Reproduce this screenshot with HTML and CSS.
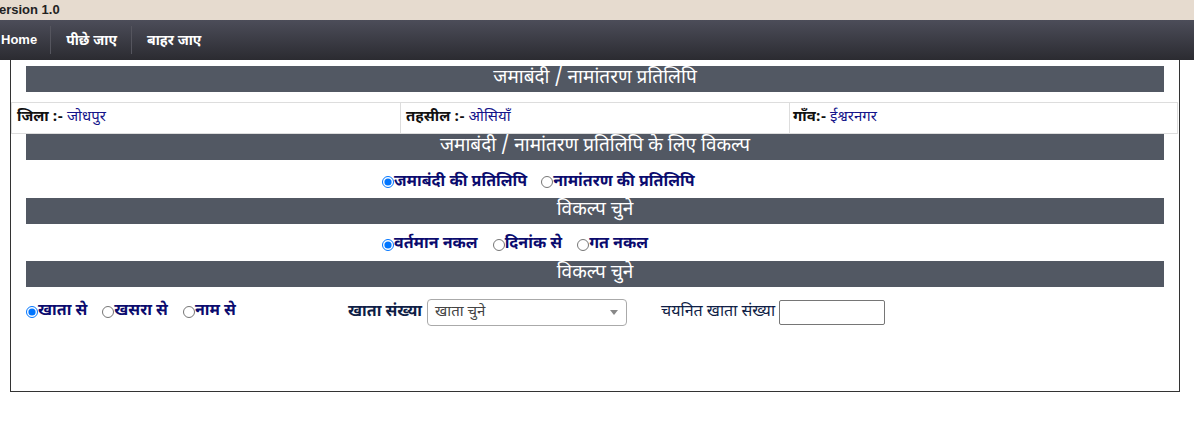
FILE: index.html
```html
<!DOCTYPE html>
<html lang="hi">
<head>
<meta charset="utf-8">
<title>जमाबंदी / नामांतरण प्रतिलिपि</title>
<link rel="stylesheet" href="styles.css">
</head>
<body>
<div class="topbar"><span class="ver">Version 1.0</span></div>
<nav class="nav">
  <a class="nav-item first" href="#">Home</a>
  <a class="nav-item hi" href="#">पीछे जाए</a>
  <a class="nav-item hi" href="#">बाहर जाए</a>
</nav>
<div class="panel">
  <div class="bar bar-first">जमाबंदी / नामांतरण प्रतिलिपि</div>
  <div class="info">
    <div class="cell"><b>जिला :-</b> <span class="val">जोधपुर</span></div>
    <div class="cell"><b>तहसील :-</b> <span class="val">ओसियाँ</span></div>
    <div class="cell"><b>गाँव:-</b> <span class="val">ईश्वरनगर</span></div>
  </div>
  <div class="bar">जमाबंदी / नामांतरण प्रतिलिपि के लिए विकल्प</div>
  <div class="opts opts-1">
    <label class="opt"><input type="radio" name="t" checked>जमाबंदी की प्रतिलिपि</label>
    <label class="opt"><input type="radio" name="t">नामांतरण की प्रतिलिपि</label>
  </div>
  <div class="bar">विकल्प चुने</div>
  <div class="opts opts-2">
    <label class="opt"><input type="radio" name="n" checked>वर्तमान नकल</label>
    <label class="opt"><input type="radio" name="n">दिनांक से</label>
    <label class="opt"><input type="radio" name="n">गत नकल</label>
  </div>
  <div class="bar">विकल्प चुने</div>
  <div class="search">
    <div class="search-radios">
      <label class="opt"><input type="radio" name="s" checked>खाता से</label>
      <label class="opt"><input type="radio" name="s">खसरा से</label>
      <label class="opt"><input type="radio" name="s">नाम से</label>
    </div>
    <div class="field">
      <span class="field-label bold">खाता संख्या</span>
      <div class="select"><span>खाता चुने</span><span class="caret"></span></div>
    </div>
    <div class="field field-2">
      <span class="field-label">चयनित खाता संख्या</span>
      <input class="textbox" type="text">
    </div>
  </div>
</div>
</body>
</html>
```

FILE: styles.css
```css
* { box-sizing: border-box; }
html, body { margin: 0; padding: 0; background: #fff; }
body {
  font-family: "Noto Sans Devanagari", "Noto Sans", "Liberation Sans", sans-serif;
  color: #000;
  overflow: hidden;
}
.topbar {
  height: 20px;
  background: #e6dbcf;
  font-family: "Liberation Sans", Arial, sans-serif;
  font-weight: bold;
  font-size: 13px;
  line-height: 20px;
  color: #222;
  overflow: hidden;
  white-space: nowrap;
}
.ver { margin-left: -9px; }
.nav {
  height: 40px;
  background: linear-gradient(#4c4d59, #2b2b31);
  display: flex;
  align-items: center;
}
.nav-item {
  color: #fff;
  text-decoration: none;
  font-weight: bold;
  font-size: 13px;
  line-height: 28px;
  height: 28px;
  padding: 0 14px 0 15px;
  border-right: 1px solid #55555e;
  font-family: "Liberation Sans", "Noto Sans Devanagari", sans-serif;
}
.nav-item.hi { font-size: 14px; padding: 0 14px 0 15px; }
.nav-item.first { padding-left: 1px; padding-right: 13px; }
.nav-item:last-child { border-right: none; }
.panel {
  width: 1170px;
  height: 332px;
  margin-left: 10px;
  border: 1px solid #333;
  border-top: none;
  padding-top: 6px;
}
.bar {
  margin: 0 15px;
  height: 26px;
  line-height: 26px;
  background: #525863;
  color: #fff;
  text-align: center;
  font-size: 19px;
  white-space: nowrap;
  overflow: hidden;
}
.info {
  margin-top: 10px;
  margin-right: 1px;
  display: grid;
  grid-template-columns: 389px 389px 1fr;
  border: 1px solid #ddd;
  height: 32px;
}
.cell {
  padding: 0 5px;
  font-size: 15px;
  line-height: 30px;
  border-right: 1px solid #ddd;
  white-space: nowrap;
}
.cell:last-child { border-right: none; padding-left: 3px; }
.cell b { color: #111; }
.val { color: #14148a; }
.opts {
  display: flex;
  align-items: center;
  padding-left: 371px;
  gap: 15px;
}
.opts-1 { height: 38px; padding-top: 6px; gap: 14px; }
.opts-2 { height: 37px; padding-top: 4px; }
.opt {
  display: inline-flex;
  align-items: center;
  font-weight: bold;
  font-size: 16px;
  color: #0b0b6e;
  white-space: nowrap;
}
.opt input {
  margin: 0;
  width: 12px;
  height: 12px;
}
.search {
  display: flex;
  align-items: center;
  padding: 12px 0 0 15px;
}
.search-radios {
  display: flex;
  gap: 15px;
  width: 322px;
  align-self: flex-start;
  padding-top: 2px;
}
.field {
  display: flex;
  align-items: center;
  gap: 5px;
}
.field-2 { margin-left: 34px; gap: 4px; }
.field-label {
  font-size: 16px;
  color: #0f1e46;
  white-space: nowrap;
}
.field-label.bold { font-weight: bold; }
.select {
  width: 200px;
  height: 27px;
  border: 1px solid #aaa;
  border-radius: 4px;
  display: flex;
  align-items: center;
  justify-content: space-between;
  padding: 0 8px 0 7px;
  font-size: 15px;
  color: #444;
}
.caret {
  width: 0;
  height: 0;
  border-left: 4px solid transparent;
  border-right: 4px solid transparent;
  border-top: 5px solid #888;
}
.textbox {
  width: 106px;
  height: 25px;
  border: 1px solid #767676;
  border-radius: 2px;
  margin: 0;
  padding: 1px 2px;
}
```
